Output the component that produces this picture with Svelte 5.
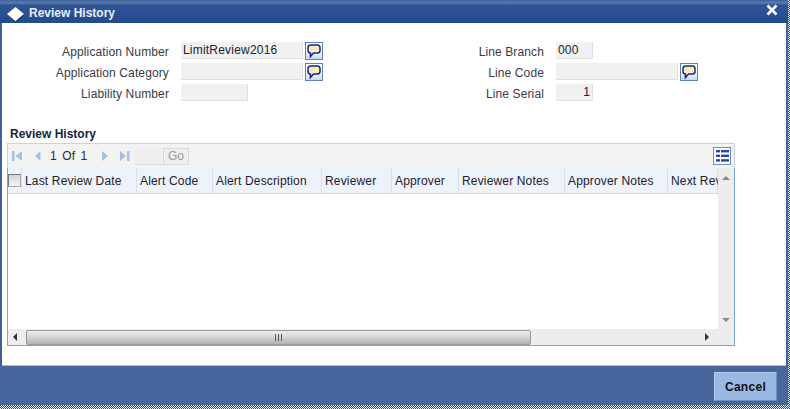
<script lang="ts">
  const leftFields = [
    { label: 'Application Number', value: 'LimitReview2016', size: 'wide', lookup: true },
    { label: 'Application Category', value: '', size: 'wide', lookup: true },
    { label: 'Liability Number', value: '', size: 'mid', lookup: false }
  ];
  const rightFields = [
    { label: 'Line Branch', value: '000', size: 'small', lookup: false },
    { label: 'Line Code', value: '', size: 'wide', lookup: true },
    { label: 'Line Serial', value: '1', size: 'small num', lookup: false }
  ];
  const columns = [
    { name: 'Last Review Date', width: 115 },
    { name: 'Alert Code', width: 76 },
    { name: 'Alert Description', width: 109 },
    { name: 'Reviewer', width: 70 },
    { name: 'Approver', width: 67 },
    { name: 'Reviewer Notes', width: 106 },
    { name: 'Approver Notes', width: 103 },
    { name: 'Next Rev', width: 50 }
  ];
</script>

{#snippet lookup()}
  <button class="lookup" aria-label="List of values">
    <svg width="14" height="14" viewBox="0 0 14 14">
      <defs>
        <linearGradient id="bubble" x1="0" y1="0" x2="1" y2="1">
          <stop offset="0" stop-color="#fbdf94" />
          <stop offset="1" stop-color="#fff8e4" />
        </linearGradient>
      </defs>
      <path d="M3.5 1h7A2.6 2.6 0 0 1 13 3.6v2.8A2.6 2.6 0 0 1 10.5 9H6.6L3.4 12.6V9A2.6 2.6 0 0 1 1 6.4V3.6A2.6 2.6 0 0 1 3.5 1z" fill="url(#bubble)" stroke="#0b2a96" stroke-width="1.5" />
    </svg>
  </button>
{/snippet}

{#snippet fieldColumn(fields, cls)}
  <div class="fields {cls}">
    {#each fields as f}
      <div class="field">
        <span class="label">{f.label}</span>
        <div class="input {f.size}">{f.value}</div>
        {#if f.lookup}{@render lookup()}{/if}
      </div>
    {/each}
  </div>
{/snippet}

<div class="window">
  <header class="titlebar">
    <svg class="diamond" width="18" height="15" viewBox="0 0 18 15">
      <path d="M10 1.5l7.5 6.5L10 14.5z" fill="#12305f" />
      <path d="M8.5 0L17 7 8.5 14 0 7z" fill="#fff" />
    </svg>
    <h1>Review History</h1>
    <svg class="close" width="12" height="12" viewBox="0 0 12 12">
      <path d="M1.5 1.5l9 9M10.5 1.5l-9 9" stroke="#fff" stroke-width="2.6" />
    </svg>
  </header>

  <main class="content">
    <section class="form">
      {@render fieldColumn(leftFields, 'left')}
      {@render fieldColumn(rightFields, 'right')}
    </section>

    <h2>Review History</h2>

    <section class="panel">
      <div class="toolbar">
        <svg class="pager" width="118" height="12" viewBox="0 0 118 12">
          <g fill="#a9bfe0">
            <rect x="0" y="1" width="2.5" height="10" />
            <path d="M10 1v10L3.5 6z" />
            <path d="M28.5 1v10L23 6z" />
            <path d="M90 1v10l6-5z" />
            <path d="M108 1v10l6-5z" />
            <rect x="115" y="1" width="2.5" height="10" />
          </g>
        </svg>
        <span class="page-label">1 Of 1</span>
        <div class="page-input"></div>
        <button class="go">Go</button>
        <button class="columns-btn" aria-label="Columns">
          <svg width="13" height="12" viewBox="0 0 13 12">
            <g fill="#2344a8">
              <rect x="0" y="0" width="4" height="2.4" /><rect x="5" y="0" width="8" height="2.4" />
              <rect x="0" y="4.6" width="4" height="2.4" /><rect x="5" y="4.6" width="8" height="2.4" />
              <rect x="0" y="9.2" width="4" height="2.4" /><rect x="5" y="9.2" width="8" height="2.4" />
            </g>
          </svg>
        </button>
      </div>

      <div class="table-wrap">
        <div class="grid">
          <div class="grid-main">
            <div class="thead">
              <div class="check-cell"><span class="checkbox"></span></div>
              {#each columns as c}
                <div class="th" style="width: {c.width}px">{c.name}</div>
              {/each}
            </div>
            <div class="tbody"></div>
          </div>
          <div class="vscroll">
            <span class="arrow up"></span>
            <span class="arrow down"></span>
          </div>
        </div>

        <div class="hscroll">
          <span class="arrow left"></span>
          <div class="thumb"><span class="grip"></span></div>
          <span class="arrow right"></span>
        </div>
      </div>
    </section>
  </main>

  <footer class="footer">
    <button class="cancel">Cancel</button>
  </footer>
</div>

<style>
  :global(body) {
    margin: 0;
    background: repeating-conic-gradient(#2a4a80 0 25%, #e8ebf0 0 50%) 0 0 / 2px 2px;
    font-family: 'Liberation Sans', Arial, sans-serif;
    overflow: hidden;
  }

  .window {
    width: 788px;
    height: 405px;
    display: flex;
    flex-direction: column;
    background: #3f6099;
    box-sizing: border-box;
    padding: 0 2px;
  }

  .titlebar {
    height: 23px;
    margin: 0 -2px;
    padding: 0 10px 0 7px;
    display: flex;
    align-items: center;
    background: linear-gradient(#3e6299 0, #5b7cae 3px, #2f5597 5px, #234a8e 100%);
    flex: none;
  }

  .diamond {
    margin-right: 4px;
    margin-top: 5px;
  }

  h1 {
    margin: 2px 0 0;
    font-size: 12px;
    font-weight: 700;
    color: #e6ecf6;
    flex: 1;
  }

  .close {
    margin-top: -3px;
  }

  .content {
    height: 343px;
    flex: none;
    background: #fff;
    border-bottom: 1px solid #a9c0e0;
    box-sizing: border-box;
    padding: 19px 0 0 5px;
  }

  .form {
    display: flex;
    height: 63px;
  }

  .fields {
    display: flex;
    flex-direction: column;
    gap: 4px;
  }

  .fields.left {
    width: 375px;
  }

  .field {
    display: flex;
    align-items: center;
    height: 17px;
  }

  .label {
    width: 162px;
    font-size: 12px;
    letter-spacing: 0.12px;
    color: #3a3a44;
    text-align: right;
    margin-right: 12px;
    margin-top: 2px;
    white-space: nowrap;
  }

  .input {
    height: 17px;
    box-sizing: border-box;
    background: #f1f1f1;
    border: 1px solid #e0e0e0;
    border-width: 0 1px 1px 0;
    font-size: 12px;
    letter-spacing: 0.2px;
    line-height: 17px;
    padding: 0 2px;
    color: #22222c;
  }

  .wide {
    width: 122px;
  }

  .mid {
    width: 67px;
  }

  .small {
    width: 37px;
  }

  .num {
    text-align: right;
  }

  .lookup {
    width: 18px;
    height: 18px;
    margin-left: 2px;
    padding: 0;
    display: flex;
    align-items: center;
    justify-content: center;
    background: linear-gradient(#fff, #fff 50%, #c9d8ee);
    border: 1px solid #5f7fb5;
  }

  h2 {
    margin: 21px 0 0 3px;
    height: 17px;
    font-size: 12px;
    line-height: 16px;
    font-weight: 700;
    color: #18243c;
  }

  .panel {
    width: 728px;
    height: 203px;
    display: flex;
    flex-direction: column;
    background: #fff;
  }

  .toolbar {
    height: 25px;
    flex: none;
    box-sizing: border-box;
    display: flex;
    align-items: center;
    padding-left: 5px;
    background: #f3f3f3;
    border: 1px solid #c6d3e6;
    border-bottom: 0;
    position: relative;
  }

  .pager {
    position: absolute;
    left: 4px;
    top: 6px;
  }

  .page-label {
    margin-left: 37px;
    width: 85px;
    font-size: 12px;
    letter-spacing: 0.1px;
    word-spacing: 2px;
    color: #2a2a34;
  }

  .page-input {
    width: 27px;
    height: 16px;
    background: #eee;
    border-bottom: 1px solid #ddd;
    margin-right: 1px;
  }

  .go {
    width: 26px;
    height: 17px;
    padding: 0;
    font: 12px 'Liberation Sans', Arial, sans-serif;
    color: #9a9a9a;
    background: #efefef;
    border: 1px solid #d9d9d9;
  }

  .columns-btn {
    margin-left: auto;
    margin-right: 3px;
    width: 18px;
    height: 18px;
    padding: 0;
    display: flex;
    align-items: center;
    justify-content: center;
    background: #fff;
    border: 1px solid #6f8fc0;
  }

  .table-wrap {
    flex: 1;
    min-height: 0;
    display: flex;
    flex-direction: column;
    border: 1px solid #7fa6d8;
    border-top: 0;
  }

  .grid {
    flex: 1;
    display: flex;
    min-height: 0;
  }

  .grid-main {
    flex: 1;
    min-width: 0;
    overflow: hidden;
    display: flex;
    flex-direction: column;
  }

  .thead {
    height: 26px;
    flex: none;
    display: flex;
    background: #eef2fb;
    border-bottom: 1px solid #cfd9ea;
    box-sizing: border-box;
  }

  .check-cell {
    width: 14px;
    flex: none;
    box-sizing: border-box;
    border-right: 1px solid #d6dfef;
    display: flex;
    align-items: center;
  }

  .checkbox {
    width: 13px;
    height: 13px;
    box-sizing: border-box;
    background: linear-gradient(#d4d4d4, #f4f4f4);
    border: 1px solid #777;
    border-right-color: #aaa;
    border-bottom-color: #aaa;
  }

  .th {
    flex: none;
    box-sizing: border-box;
    border-right: 1px solid #d6dfef;
    padding-left: 3px;
    font-size: 12px;
    letter-spacing: 0.16px;
    line-height: 27px;
    color: #22222c;
    white-space: nowrap;
  }

  .tbody {
    flex: 1;
  }

  .vscroll {
    width: 16px;
    flex: none;
    background: #eeeded;
    display: flex;
    flex-direction: column;
    justify-content: space-between;
    align-items: center;
    padding: 8px 0 7px;
    box-sizing: border-box;
  }

  .hscroll {
    height: 16px;
    flex: none;
    display: flex;
    align-items: center;
    background: #eeeded;
  }

  .arrow {
    width: 0;
    height: 0;
    border: 4px solid transparent;
  }

  .arrow.up {
    border-top: 0;
    border-bottom: 4px solid #8a8a8a;
  }

  .arrow.down {
    border-bottom: 0;
    border-top: 4px solid #8a8a8a;
  }

  .arrow.left {
    margin-left: 5px;
    border-left: 0;
    border-right: 4px solid #333;
  }

  .arrow.right {
    margin-left: 174px;
    border-right: 0;
    border-left: 4px solid #333;
  }

  .thumb {
    width: 505px;
    height: 15px;
    margin-left: 9px;
    box-sizing: border-box;
    border: 1px solid #999;
    border-radius: 2px;
    background: linear-gradient(#ededed, #d6d6d6 45%, #b2b2b2);
    display: flex;
    align-items: center;
    justify-content: center;
  }

  .grip {
    width: 7px;
    height: 7px;
    background: repeating-linear-gradient(90deg, #555 0 1px, transparent 1px 3px);
  }

  .footer {
    flex: 1;
    display: flex;
    justify-content: flex-end;
    align-items: flex-start;
    padding: 6px 10px 0 0;
    background: #48669e;
    margin: 0 -1px 0 -2px;
  }

  .cancel {
    width: 63px;
    height: 29px;
    padding: 0;
    font: 700 12px 'Liberation Sans', Arial, sans-serif;
    letter-spacing: 0.3px;
    color: #111;
    background: #9ab8e4;
    border: 1px solid #b4c8e8;
    border-right-color: #6d8cc0;
    border-bottom-color: #6d8cc0;
  }
</style>
